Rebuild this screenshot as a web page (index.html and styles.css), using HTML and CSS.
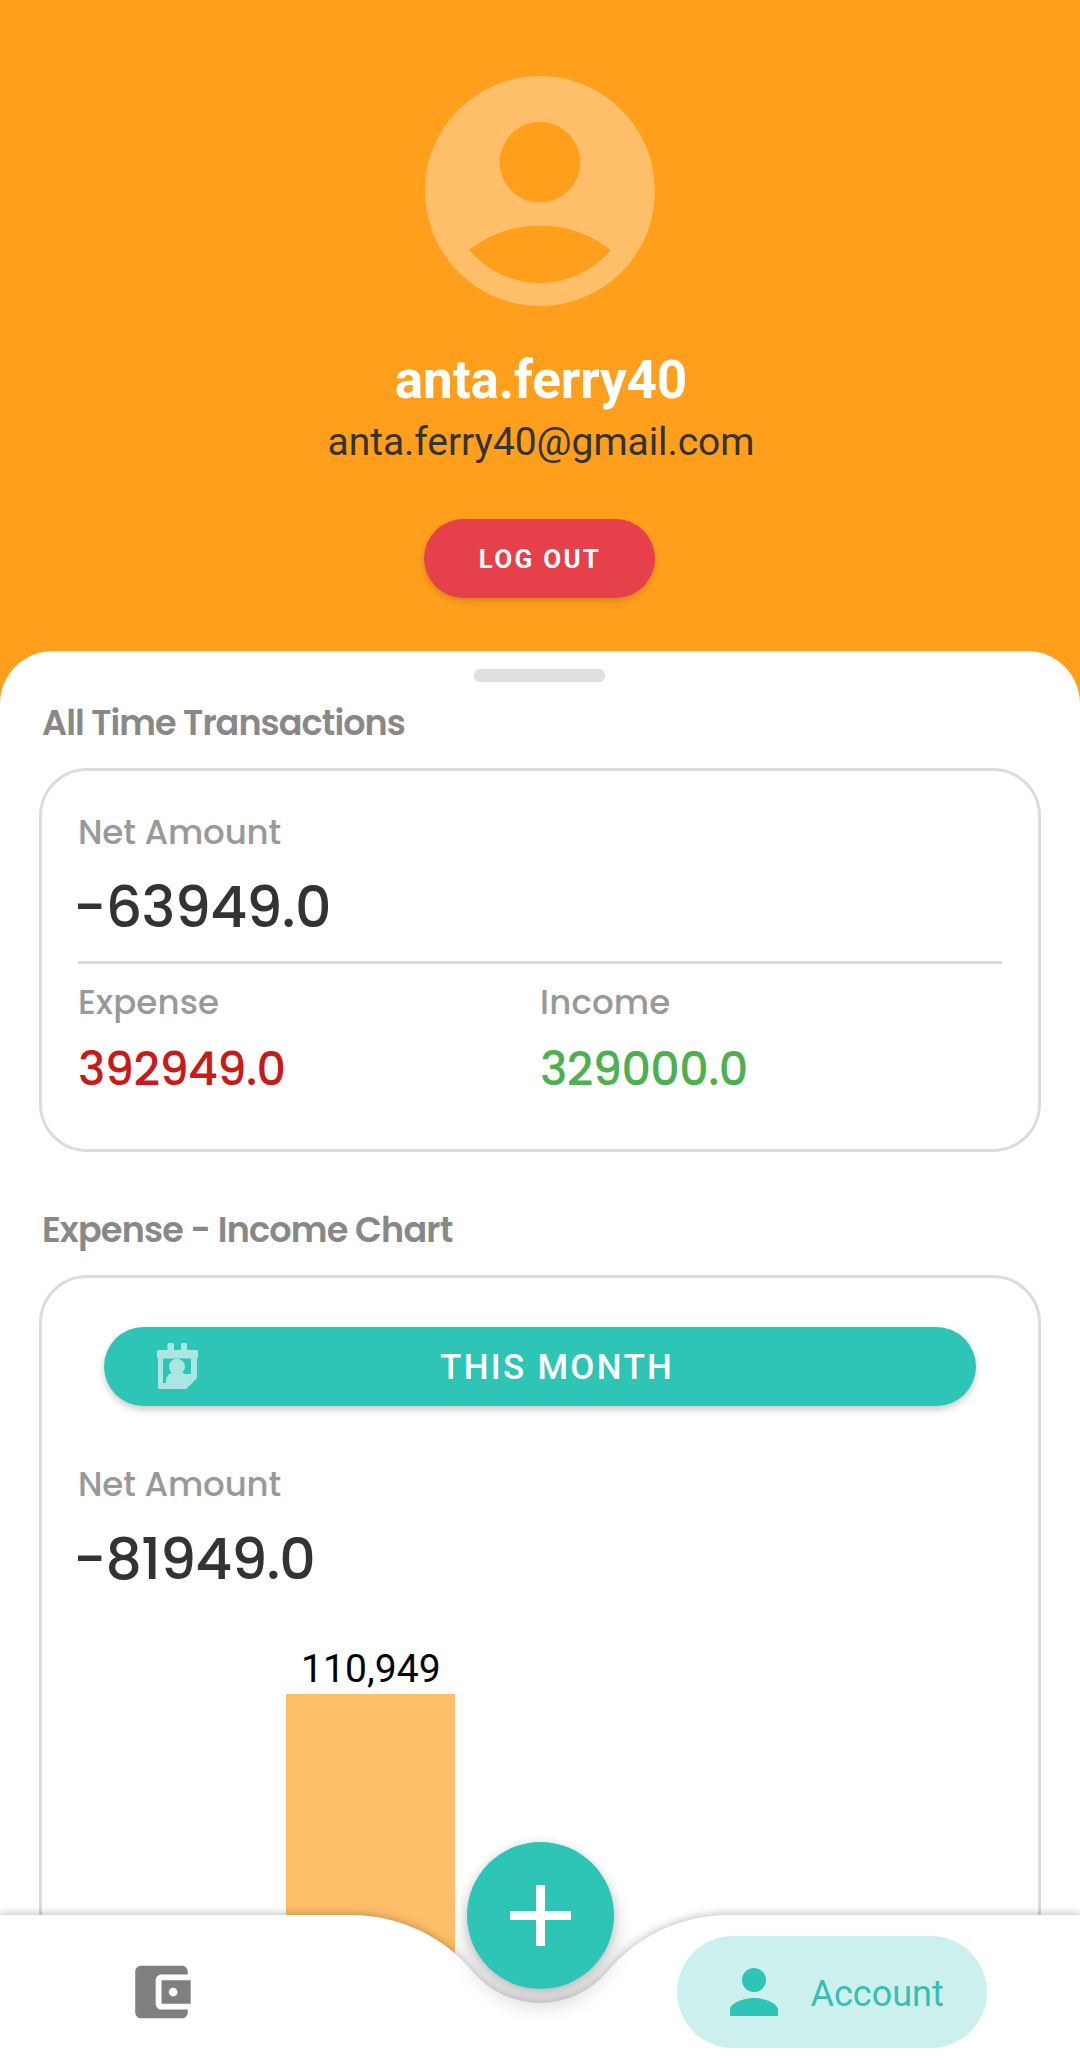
FILE: index.html
```html
<!DOCTYPE html>
<html lang="en">
<head>
<meta charset="utf-8">
<title>Account</title>
<link rel="stylesheet" href="styles.css">
</head>
<body>
<div class="app">
  <header class="profile">
    <svg class="avatar" viewBox="0 0 24 24"><path fill-rule="evenodd" d="M12 2C6.48 2 2 6.48 2 12s4.48 10 10 10 10-4.48 10-10S17.52 2 12 2zM12 6c1.93 0 3.5 1.57 3.5 3.5S13.93 13 12 13s-3.5-1.57-3.5-3.5S10.07 6 12 6zm0 14c-2.03 0-4.43-.82-6.14-2.88C7.55 15.8 9.68 15 12 15s4.45.8 6.14 2.12C16.43 19.18 14.03 20 12 20z"/></svg>
    <h1 class="name">anta.ferry40</h1>
    <p class="email">anta.ferry40@gmail.com</p>
    <button class="logout">LOG OUT</button>
  </header>

  <main class="sheet">
    <div class="handle"></div>

    <h2 class="heading">All Time Transactions</h2>
    <section class="card totals">
      <p class="label">Net Amount</p>
      <p class="amount">-63949.0</p>
      <div class="split">
        <div>
          <p class="label">Expense</p>
          <p class="value expense">392949.0</p>
        </div>
        <div>
          <p class="label">Income</p>
          <p class="value income">329000.0</p>
        </div>
      </div>
    </section>

    <h2 class="heading chart-heading">Expense - Income Chart</h2>
    <section class="card chart-card">
      <button class="period">
        <svg class="calendar" viewBox="0 0 41 46">
          <path d="M12 0h3.500a1.500 1.500 0 0 1 1.500 1.500V7h7V1.500A1.500 1.500 0 0 1 25.500 0h3a1.500 1.500 0 0 1 1.500 1.500V7h9.500A1.500 1.500 0 0 1 41 8.500V14.500a1 1 0 0 1-1 1V35L29 46H2.500A1.500 1.500 0 0 1 1 44.500V15.500a1 1 0 0 1-1-1V8.500A1.500 1.500 0 0 1 1.500 7h9V1.500A1.500 1.500 0 0 1 12 0zM6 15.500V40h3c0-6 1.500-8 5.500-10.500a8 8 0 1 1 11 0l1.500 1.500h7V15.500z" fill-rule="evenodd"/>
        </svg>
        <span class="period-text">THIS MONTH</span>
      </button>
      <p class="label">Net Amount</p>
      <p class="amount second">-81949.0</p>
      <div class="chart">
        <div class="column">
          <span class="column-label">110,949</span>
          <div class="bar"></div>
        </div>
      </div>
    </section>
  </main>

  <footer class="dock">
    <svg class="dock-shape" viewBox="0 0 1080 154"><path d="M0 0H351A159 159 0 0 1 472.700 56.600A88 88 0 0 0 607.300 56.600A159 159 0 0 1 729 0H1080V154H0z"/></svg>
    <nav class="tabs">
      <a class="tab"><svg class="wallet" viewBox="0 0 24 24"><path d="M21 18v1c0 1.100-.9 2-2 2H5c-1.110 0-2-.9-2-2V5c0-1.100.89-2 2-2h14c1.100 0 2 .9 2 2v1h-9c-1.110 0-2 .9-2 2v8c0 1.100.89 2 2 2h9zm-9-2h10V8H12v8zm4-2.500c-.83 0-1.500-.67-1.500-1.500s.67-1.500 1.500-1.500 1.500.67 1.500 1.500-.67 1.500-1.500 1.500z"/></svg></a>
      <a class="tab active"><svg class="person" viewBox="0 0 24 24"><path d="M12 12c2.210 0 4-1.790 4-4s-1.790-4-4-4-4 1.790-4 4 1.790 4 4 4zm0 2c-2.670 0-8 1.340-8 4v2h16v-2c0-2.660-5.330-4-8-4z"/></svg><span class="tab-text">Account</span></a>
    </nav>
    <button class="fab"><svg class="plus" viewBox="0 0 61 61"><path d="M26 0h9v26h26v9H35v26h-9V35H0v-9h26z"/></svg></button>
  </footer>
</div>
</body>
</html>
```
FILE: styles.css
```css
* { box-sizing: border-box; }
body { margin: 0; font-family: Roboto, sans-serif; }
h1, h2, p { margin: 0; }
button { border: 0; padding: 0; font-family: inherit; }
svg { display: block; }

.app {
  position: relative;
  width: 1080px;
  height: 2069px;
  overflow: hidden;
  background: #ff9f1c;
  display: flex;
  flex-direction: column;
}

.profile {
  height: 651px;
  flex: none;
  padding-top: 53px;
  display: flex;
  flex-direction: column;
  align-items: center;
}
.avatar { width: 276px; height: 276px; fill: #ffbf69; }
.name {
  margin-top: 20px;
  padding-left: 2px;
  font-size: 53px;
  line-height: 62px;
  font-weight: 700;
  letter-spacing: -0.1px;
  color: #fff;
}
.email {
  margin-top: 8px;
  padding-left: 2px;
  font-size: 39px;
  line-height: 46px;
  letter-spacing: -0.07px;
  color: #333;
}
.logout {
  margin: 54px 1px 0 0;
  width: 231px;
  height: 79px;
  border-radius: 40px;
  background: #e6404b;
  color: #fff;
  font-size: 26px;
  font-weight: 700;
  letter-spacing: 2.26px;
  padding-left: 1px;
  box-shadow: 0 3px 6px rgba(0, 0, 0, .16);
}

.sheet {
  flex: 1;
  min-height: 0;
  background: #fff;
  border-radius: 53px 53px 0 0;
  padding: 18px 39px 0 39px;
  font-family: Poppins, Inter, sans-serif;
}
.handle {
  width: 131px;
  height: 13px;
  margin-left: 435px;
  border-radius: 6px;
  background: #e0e0e0;
}
.heading {
  margin: 19px 0 23px 3px;
  font-size: 35px;
  line-height: 44px;
  font-weight: 600;
  letter-spacing: -0.92px;
  color: #888;
}
.chart-heading { margin-top: 56px; letter-spacing: -0.8px; }

.card {
  border: 3px solid #dcdcdc;
  border-radius: 48px;
  padding: 39px 36px 0 36px;
}
.totals { height: 384px; }
.label {
  font-size: 34px;
  line-height: 44px;
  font-weight: 500;
  letter-spacing: -0.15px;
  color: #999;
}
.amount {
  margin: 20px 0 0 -5px;
  font-size: 57px;
  line-height: 66px;
  font-weight: 500;
  letter-spacing: -0.7px;
  color: #333;
}
.amount.second { letter-spacing: -0.9px; }
.split {
  display: grid;
  grid-template-columns: 1fr 1fr;
  margin-top: 21px;
  padding-top: 16px;
  border-top: 3px solid #dcdcdc;
}
.split .label { letter-spacing: 0.18px; }
.value {
  margin-top: 17px;
  font-size: 46px;
  line-height: 56px;
  font-weight: 500;
  letter-spacing: -0.55px;
}
.expense { color: #c91a1a; }
.income { color: #4caf50; }

.chart-card { height: 1000px; padding-top: 49px; }
.period {
  width: 872px;
  height: 79px;
  margin: 0 0 56px 26px;
  padding-left: 53px;
  border-radius: 40px;
  background: #2ec4b6;
  color: #fff;
  display: flex;
  align-items: center;
  font-family: Roboto, sans-serif;
  font-size: 35px;
  font-weight: 500;
  letter-spacing: 2.3px;
  box-shadow: 0 4px 7px rgba(0, 0, 0, .2);
}
.calendar { width: 41px; height: 46px; margin-bottom: 2px; fill: #abe7e2; }
.period-text { margin-left: 242px; padding-top: 2px; }

.chart { margin-top: 54px; padding-left: 208.4px; }
.column { width: 169px; font-family: Roboto, sans-serif; }
.column-label {
  display: block;
  margin-bottom: 2px;
  text-align: center;
  font-size: 39px;
  line-height: 46px;
  letter-spacing: 0.1px;
  color: #000;
}
.bar { height: 400px; background: #ffbf69; }

.dock {
  position: absolute;
  left: 0;
  bottom: 0;
  width: 1080px;
  height: 154px;
}
.dock-shape {
  position: absolute;
  inset: 0;
  width: 1080px;
  height: 154px;
  overflow: visible;
  fill: #fff;
  filter: drop-shadow(0 -1px 5px rgba(0, 0, 0, .26));
}
.tabs {
  position: relative;
  height: 154px;
  padding: 21px 93px 0 126px;
  display: flex;
  justify-content: space-between;
}
.tab { height: 112px; display: flex; align-items: center; }
.wallet { width: 71px; height: 70px; fill: #7f7f7f; }
.active {
  width: 310px;
  padding-left: 41px;
  border-radius: 56px;
  background: #ccf0ed;
  color: #36c0b3;
  font-size: 36px;
}
.person { width: 72px; height: 72px; margin-right: 20.5px; fill: #2ec4b6; }
.tab-text { padding-top: 3px; }
.fab {
  position: absolute;
  left: 467px;
  top: -73px;
  width: 147px;
  height: 147px;
  border-radius: 50%;
  background: #2ec4b6;
  display: flex;
  align-items: center;
  justify-content: center;
  box-shadow: 0 15px 22px rgba(0, 0, 0, .18), 0 1px 10px rgba(0, 0, 0, .14);
}
.plus { width: 61px; height: 61px; fill: #fff; }
```
